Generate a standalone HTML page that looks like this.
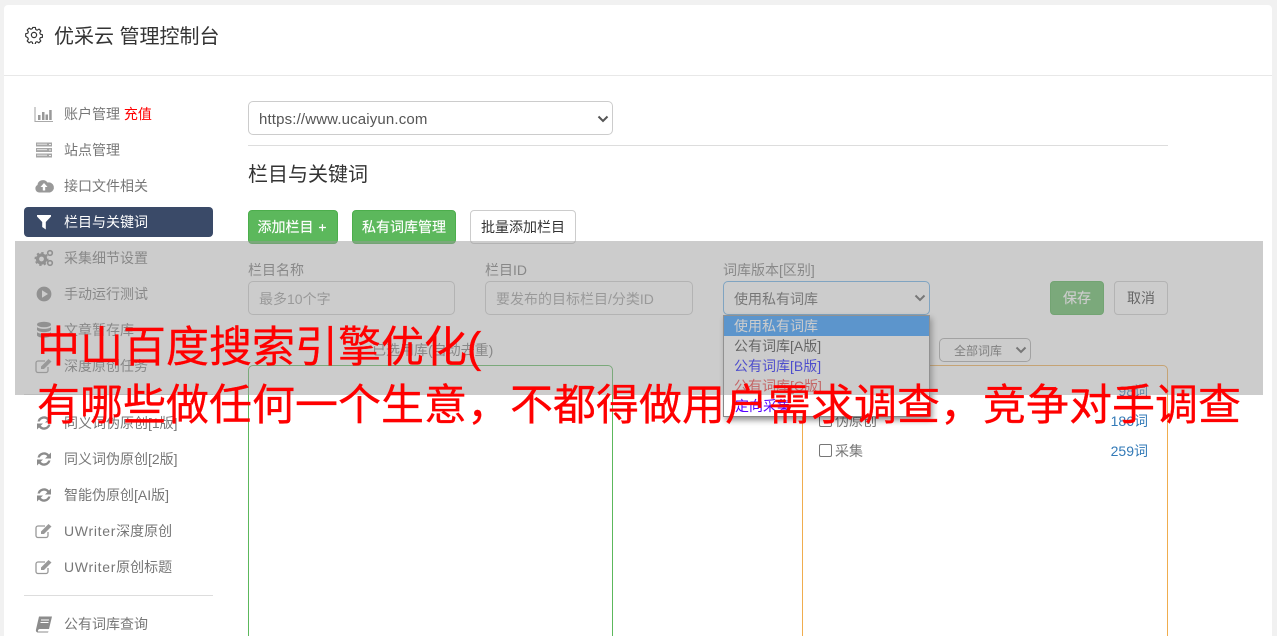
<!DOCTYPE html>
<html lang="zh-CN"><head><meta charset="utf-8"><title>优采云 管理控制台</title>
<style>
html,body{margin:0;padding:0;width:1277px;height:636px;overflow:hidden}
body{position:relative;background:#f1f1f1;font-family:"Liberation Sans","Noto Sans CJK SC",sans-serif;font-size:14px;color:#555}
.a{position:absolute;white-space:nowrap}
#card{left:4px;top:5px;width:1268px;height:631px;background:#fff;border-radius:4px 4px 0 0}
.m{left:64px;height:20px;line-height:20px;color:#777;font-size:14px}
.i{position:absolute;left:34px;width:20px;height:18px;overflow:visible}
.box{border:1px solid #ccc;border-radius:5px;box-sizing:border-box;height:34px;line-height:34px;background:#fff;padding-left:10px}
.ph{color:#999}
.lb{color:#777;line-height:20px}
.btn{box-sizing:border-box;height:34px;line-height:33px;border-radius:4px;text-align:center;border:1px solid #ccc;background:#fff;color:#333}
.g{background:#5cb85c;border-color:#4cae4c;color:#fff;-webkit-text-stroke:.15px #fff}
.opt{left:724px;width:205px;height:20px;line-height:20px;padding-left:10px;box-sizing:border-box}
.ck{width:11px;height:11px;border:1px solid #767676;border-radius:2px;background:#fff}
.n{right:129px;color:#337ab7;line-height:20px}
.tc{font-family:"Noto Sans CJK TC",sans-serif;line-height:0}
.h{left:37px;font-size:43px;height:58px;line-height:58px;color:#f00;-webkit-text-stroke:.3px #f00}
</style></head><body>
<svg width="0" height="0" style="position:absolute"><defs>
<symbol id="ref" viewBox="0 0 20 18"><path d="M3.500 7.500A6.700 6.700 0 0 1 15 4.500L17 2.500V8.500H11L13.300 6.200A4.400 4.400 0 0 0 5.800 7.500ZM16.500 10.500A6.700 6.700 0 0 1 5 13.500L3 15.500V9.500H9L6.700 11.800A4.400 4.400 0 0 0 14.200 10.500Z" fill="#8c8c8c"/></symbol>
<symbol id="edit" viewBox="0 0 20 18"><path d="M14 10v3.500A2 2 0 0 1 12 15.500H4A2 2 0 0 1 2 13.500V6A2 2 0 0 1 4 4h7" fill="none" stroke="#999" stroke-width="1.300"/><path d="M7 9.500 14.500 2 17.500 4.500 10 12H7Z" fill="#999"/></symbol>
</defs></svg>

<div class="a" id="card"></div>
<div class="a" style="left:4px;top:75px;width:1268px;height:1px;background:#e8e8e8"></div>

<svg class="a" style="left:25px;top:26px" width="18" height="18" viewBox="0 0 18 18"><circle cx="9" cy="9" r="2.600" fill="none" stroke="#333" stroke-width="1.200"/><path d="M7.600 1h2.800l.4 2.200 1.500.7 1.900-1.200 2 2-1.200 1.900.6 1.500 2.200.5v2.800l-2.200.4-.7 1.500 1.200 1.900-2 2-1.900-1.200-1.500.6-.4 2.200H7.600l-.4-2.200-1.500-.6-1.900 1.200-2-2 1.200-1.900-.6-1.500L.2 10.400V7.600l2.200-.5.6-1.500-1.200-1.900 2-2 1.900 1.200 1.500-.7Z" transform="translate(.5 .5) scale(.95)" fill="none" stroke="#333" stroke-width="1.200" stroke-linejoin="round"/></svg>
<div class="a" style="left:54px;top:23px;font-size:20px;line-height:28px;color:#333">优采云 管理控制台</div>

<!-- sidebar -->
<div class="a" style="left:24px;top:207px;width:189px;height:30px;background:#3a4a68;border-radius:4px"></div>

<svg class="i" style="top:105px" viewBox="0 0 20 18"><path d="M1 2V16.500H19" fill="none" stroke="#aaa" stroke-width="1.100"/><path d="M4 10h2.500v5H4ZM8 7h2.500v8H8ZM11.500 9.500H14V15h-2.500ZM15.200 5h2.500v10h-2.500Z" fill="#999"/></svg>
<div class="a m" style="top:104px">账户管理 <span style="color:#f00">充值</span></div>

<svg class="i" style="top:141px" viewBox="0 0 20 18"><path d="M2 1.500h16v4H2ZM2 7h16v4H2ZM2 12.500h16v4H2Z" fill="#a5a5a5"/><path d="M3 3.200h10M3 8.700h10M3 14.200h10" stroke="#eee" stroke-width=".8"/><path d="M15 3.500h2M15 9h2M15 14.500h2" stroke="#eee"/></svg>
<div class="a m" style="top:140px">站点管理</div>

<svg class="i" style="top:177px" viewBox="0 0 20 18"><path d="M5 15.500A4 4 0 0 1 3.500 8 5.500 5.500 0 0 1 13.500 5.500 5 5 0 0 1 16 15.500Z" fill="#999"/><path d="M10 6 13.500 10H11.200V13.500H8.800V10H6.500Z" fill="#fff"/></svg>
<div class="a m" style="top:176px">接口文件相关</div>

<svg class="i" style="top:213px" viewBox="0 0 20 18"><path d="M3 2H17V3.500L11.800 9V16.500L8.200 14V9L3 3.500Z" fill="#fff"/></svg>
<div class="a m" style="top:212px;color:#fff">栏目与关键词</div>

<svg class="i" style="top:249px" viewBox="0 0 20 18"><circle cx="7.500" cy="10" r="4" fill="none" stroke="#888" stroke-width="3.200"/><circle cx="7.500" cy="10" r="6.200" fill="none" stroke="#888" stroke-width="1.600" stroke-dasharray="2.400 2.400"/><circle cx="16" cy="4" r="2.300" fill="none" stroke="#888" stroke-width="1.600"/><circle cx="16" cy="14" r="2.300" fill="none" stroke="#888" stroke-width="1.600"/></svg>
<div class="a m" style="top:248px">采集细节设置</div>

<svg class="i" style="top:285px" viewBox="0 0 20 18"><circle cx="10" cy="9" r="7.400" fill="#888"/><path d="M8 5.200 14 9 8 12.800Z" fill="#fff"/></svg>
<div class="a m" style="top:284px">手动运行测试</div>

<svg class="i" style="top:321px" viewBox="0 0 20 18"><ellipse cx="10" cy="3.500" rx="7" ry="2.800" fill="#888"/><path d="M3 6c2 2.500 12 2.500 14 0v3c-2 2.800-12 2.800-14 0ZM3 11c2 2.500 12 2.500 14 0v3.500c-2 3-12 3-14 0Z" fill="#888"/></svg>
<div class="a m" style="top:320px">文章暂存库</div>

<svg class="i" style="top:357px"><use href="#edit"/></svg>
<div class="a m" style="top:356px">深度原创任务</div>

<div class="a" style="left:24px;top:394px;width:189px;height:1px;background:#ddd"></div>

<svg class="i" style="top:414px"><use href="#ref"/></svg>
<div class="a m" style="top:413px">同义词伪原创[1版]</div>
<svg class="i" style="top:450px"><use href="#ref"/></svg>
<div class="a m" style="top:449px">同义词伪原创[2版]</div>
<svg class="i" style="top:486px"><use href="#ref"/></svg>
<div class="a m" style="top:485px">智能伪原创[AI版]</div>
<svg class="i" style="top:522px"><use href="#edit"/></svg>
<div class="a m" style="top:521px"><span style="letter-spacing:.7px">UWriter</span>深度原创</div>
<svg class="i" style="top:558px"><use href="#edit"/></svg>
<div class="a m" style="top:557px"><span style="letter-spacing:.7px">UWriter</span>原创标题</div>

<div class="a" style="left:24px;top:595px;width:189px;height:1px;background:#ddd"></div>

<svg class="i" style="top:615px" viewBox="0 0 20 18"><path d="M5 1.500H18L15 14H5.500A2 2 0 0 0 4 16.500H14.500L14 17.500H3.500A2.500 2.500 0 0 1 2 14.500Z" fill="#8c8c8c"/><path d="M7 5h8M6.500 7.500h8" stroke="#fff" stroke-width=".9"/></svg>
<div class="a m" style="top:614px">公有词库查询</div>

<!-- main -->
<div class="a box" style="left:248px;top:101px;width:365px;color:#555;font-size:15px;letter-spacing:.15px;line-height:35px">https://www.ucaiyun.com</div>
<svg class="a" style="left:597px;top:115px" width="12" height="8" viewBox="0 0 12 8"><path d="M1.500 1.500 6 6 10.500 1.500" fill="none" stroke="#555" stroke-width="2"/></svg>
<div class="a" style="left:248px;top:145px;width:920px;height:1px;background:#ddd"></div>
<div class="a" style="left:248px;top:161px;font-size:20px;line-height:28px;color:#333">栏目与关键词</div>

<div class="a btn g" style="left:248px;top:210px;width:90px;padding-right:2px;word-spacing:1px">添加栏目 +</div>
<div class="a btn g" style="left:352px;top:210px;width:104px">私有词库管理</div>
<div class="a btn" style="left:470px;top:210px;width:106px">批量添加栏目</div>

<div class="a lb" style="left:248px;top:260px">栏目名称</div>
<div class="a box ph" style="left:248px;top:281px;width:207px">最多10个字</div>
<div class="a lb" style="left:485px;top:260px">栏目ID</div>
<div class="a box ph" style="left:485px;top:281px;width:208px">要发布的目标栏目/分类ID</div>
<div class="a lb" style="left:723px;top:260px">词库版本[区别]</div>
<div class="a box" style="left:723px;top:281px;width:207px;border-color:#66afe9;color:#555">使用私有词库</div>
<svg class="a" style="left:914px;top:294px" width="12" height="8" viewBox="0 0 12 8"><path d="M1.500 1.500 6 6 10.500 1.500" fill="none" stroke="#555" stroke-width="2"/></svg>
<div class="a btn g" style="left:1050px;top:281px;width:54px">保存</div>
<div class="a btn" style="left:1114px;top:281px;width:54px">取消</div>

<div class="a lb" style="left:372px;top:340px">已选用库(自动去重)</div>
<div class="a box" style="left:939px;top:338px;width:92px;height:24px;line-height:24px;font-size:12px;padding-left:14px;border-color:#aaa;color:#666">全部词库</div>
<svg class="a" style="left:1015px;top:346px" width="12" height="8" viewBox="0 0 12 8"><path d="M1.500 1.500 6 6 10.500 1.500" fill="none" stroke="#555" stroke-width="2"/></svg>

<div class="a" style="left:248px;top:365px;width:365px;height:290px;box-sizing:border-box;border:1px solid #5cb85c;border-radius:5px;background:#fff"></div>
<div class="a" style="left:802px;top:365px;width:366px;height:290px;box-sizing:border-box;border:1px solid #f0ad4e;border-radius:5px;background:#fff"></div>

<div class="a ck" style="left:819px;top:385px"></div>
<div class="a lb" style="left:835px;top:381px">原创</div>
<div class="a n" style="top:381px">98词</div>
<div class="a ck" style="left:819px;top:414px"></div>
<div class="a lb" style="left:835px;top:411px">伪原创</div>
<div class="a n" style="top:411px">186词</div>
<div class="a ck" style="left:819px;top:444px"></div>
<div class="a lb" style="left:835px;top:441px">采集</div>
<div class="a n" style="top:441px">259词</div>

<!-- dropdown -->
<div class="a" style="left:723px;top:315px;width:207px;height:102px;box-sizing:border-box;border:1px solid #888;background:#fff;box-shadow:2px 3px 6px rgba(0,0,0,.45)"></div>
<div class="a opt" style="top:316px;background:#1e90ff;color:#fff">使用私有词库</div>
<div class="a opt" style="top:336px;color:#333">公有词库[A版]</div>
<div class="a opt" style="top:356px;color:#00f">公有词库[B版]</div>
<div class="a opt" style="top:376px;color:#e33">公有词库[C版]</div>
<div class="a opt" style="top:396px;color:#50f;padding-left:11px">定向采集</div>

<!-- overlay -->
<div class="a" style="left:15px;top:241px;width:1248px;height:154px;background:#999;opacity:.5"></div>

<!-- red headline -->
<div class="a h" style="top:319px">中山百度搜索引擎优化(</div>
<div class="a h" style="top:377px">有哪些做任何一个生意<span class="tc">，</span>不都得做用户需求调查<span class="tc">，</span>竞争对手调查</div>
</body></html>
